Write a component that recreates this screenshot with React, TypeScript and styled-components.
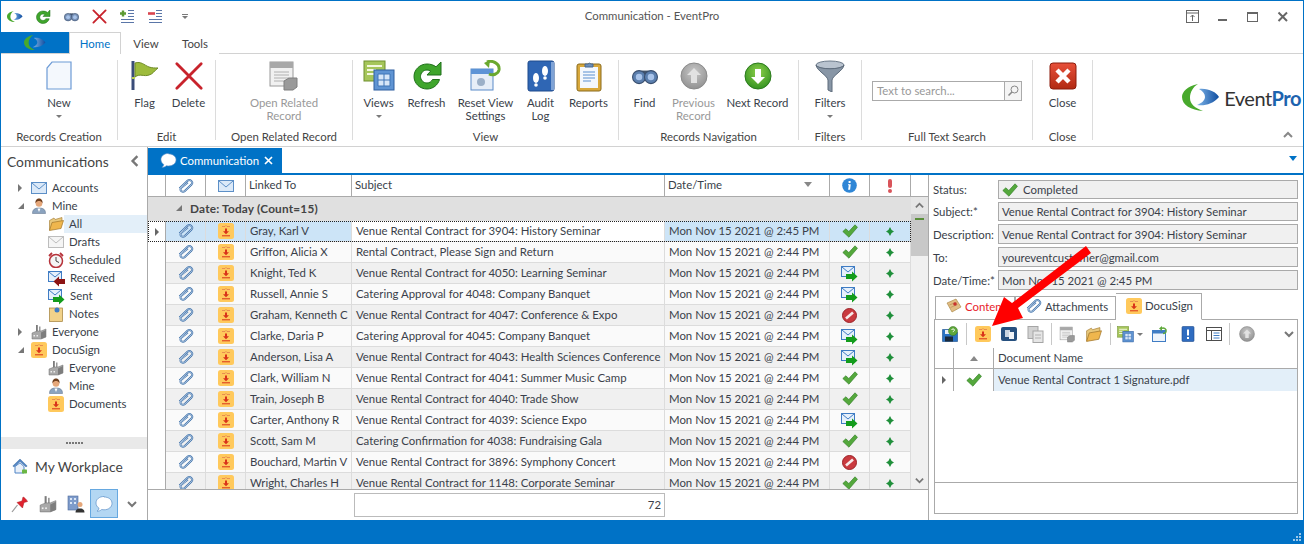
import React from "react";
import styled, { createGlobalStyle } from "styled-components";

const GlobalStyle = createGlobalStyle`
  html, body { margin: 0; padding: 0; background: #fff; }
  * { box-sizing: border-box; }
  body { font-family: "Lato", "Noto Sans", sans-serif; font-size: 11.4px; color: #3a3f4a; }
`;

/* ---------- icons ---------- */
const Ico: React.FC<{ s?: number; v?: number; children: React.ReactNode }> = ({ s = 16, v = 16, children }) => (
  <svg width={s} height={s} viewBox={`0 0 ${v} ${v}`} style={{ flex: "none", display: "block" }}>
    {children}
  </svg>
);

const Swoosh: React.FC<{ w: number }> = ({ w }) => (
  <svg width={w} height={(w * 27) / 38} viewBox="0 0 38 27" style={{ flex: "none", display: "block" }}>
    <defs>
      <linearGradient id="swb" x1="0" x2="1" y1="0" y2="0">
        <stop offset="0" stopColor="#7fb5e8" />
        <stop offset="1" stopColor="#0f4da0" />
      </linearGradient>
    </defs>
    <path d="M16 0C5 2 0 8 0 13c0 8 9 13 21 14-8-3-13-7-13-13C8 8 11 3 16 0z" fill="#48a92c" />
    <path d="M17 5c9-1 17 3 20 8-6 7-14 9-22 8 5-2 8-5 8-8 0-3-2-6-6-8z" fill="url(#swb)" />
  </svg>
);

const Refresh: React.FC<{ s?: number }> = ({ s = 32 }) => (
  <Ico s={s} v={32}>
    <path d="M16 4C9 4 3 9.500 3 16.500S9 29 16 29c6 0 11-4 12.500-9.500h-7C20.500 21.500 18.500 23 16 23c-3.600 0-6.500-3-6.500-6.500S12.400 10 16 10c1.400 0 2.600.4 3.600 1.200L16 15h14V2l-5 4.800C22.600 5 19.500 4 16 4z" fill="#3fa52c" stroke="#1f6f1a" strokeWidth="1" />
  </Ico>
);
const Binoculars: React.FC<{ s?: number; c?: string }> = ({ s = 24, c = "#5b7fae" }) => (
  <Ico s={s} v={24}>
    <rect x="9" y="7" width="6" height="6" fill="#44546a" />
    <circle cx="6.500" cy="13" r="6" fill={c} stroke="#3a4f6e" />
    <circle cx="17.500" cy="13" r="6" fill={c} stroke="#3a4f6e" />
    <circle cx="6.500" cy="13" r="3" fill="#a9c4ea" />
    <circle cx="17.500" cy="13" r="3" fill="#a9c4ea" />
  </Ico>
);
const RedX: React.FC<{ s?: number; w?: number }> = ({ s = 32, w = 3 }) => (
  <Ico s={s} v={32}>
    <path d="M3 3L29 29M29 3L3 29" stroke="#c8232c" strokeWidth={w} strokeLinecap="round" />
  </Ico>
);
const RowEdit: React.FC<{ kind: "add" | "remove" }> = ({ kind }) => (
  <Ico s={16}>
    <path d="M9 1.500h6M9 4.500h6M9 7.500h6M2 10.500h13M2 13.500h13" stroke="#5a76a8" strokeWidth="1" />
    {kind === "add" ? (
      <path d="M1 4.500h6M4 1.500v6" stroke="#5d9a33" strokeWidth="2.400" />
    ) : (
      <path d="M1 4.500h7" stroke="#d9454f" strokeWidth="2.600" />
    )}
  </Ico>
);
const NewDoc = () => (
  <Ico s={32} v={32}>
    <path d="M9 2H28V29H4V8Z" fill="#f4f8fd" stroke="#6d9bd6" strokeWidth="1.200" />
  </Ico>
);
const Flag = () => (
  <Ico s={32} v={32}>
    <path d="M4 1v29" stroke="#3a4d78" strokeWidth="3" />
    <path d="M6 3c6-2 9 2 14 4 3 1 6 1 9 1-4 3-5 6-9 7-5 2-9-2-14 2z" fill="#9dbb3c" stroke="#6f8b27" />
    <path d="M3 18h3" stroke="#b7cf4d" strokeWidth="2" />
  </Ico>
);
const GrayForm: React.FC<{ s?: number }> = ({ s = 32 }) => (
  <Ico s={s} v={32}>
    <rect x="2" y="2" width="23" height="24" fill="#f1f1f1" stroke="#9a9a9a" />
    <rect x="2" y="2" width="23" height="6" fill="#a8a8a8" />
    <path d="M6 12h15M6 15h15M6 18h15M6 21h10" stroke="#b0b0b0" />
    <path d="M16 21l5-3h8v9l-4 3h-9z" fill="#9a9a9a" stroke="#7e7e7e" />
  </Ico>
);
const Views: React.FC<{ s?: number }> = ({ s = 32 }) => (
  <Ico s={s} v={32}>
    <rect x="1" y="1" width="21" height="20" fill="#a6c65a" stroke="#6f8f2e" />
    <path d="M4 6h15M4 10h9M4 14h7" stroke="#f3f8df" strokeWidth="2" />
    <rect x="11" y="10" width="20" height="20" fill="#5f94d3" stroke="#2f5f9f" />
    <path d="M15 14h12v12H15zM15 20h12M21 14v12" fill="#d6e6f8" stroke="#3f74b6" />
  </Ico>
);
const ResetView = () => (
  <Ico s={32} v={32}>
    <rect x="1" y="9" width="22" height="21" fill="#e6eef8" stroke="#5b8bc9" />
    <rect x="1" y="9" width="22" height="5" fill="#5c93d6" />
    <circle cx="11" cy="22" r="4" fill="#9bb0c8" />
    <path d="M17 2c5-2 13 1 12 8-1 4-6 6-10 4" fill="none" stroke="#6aa92f" strokeWidth="3" />
    <path d="M20 0l-6 3 5 5z" fill="#6aa92f" />
  </Ico>
);
const AuditLog = () => (
  <Ico s={32} v={32}>
    <rect x="3" y="1" width="26" height="30" rx="2" fill="#2f66b4" stroke="#1f4a8c" />
    <rect x="26" y="2" width="3" height="28" fill="#7fa3d6" />
    <ellipse cx="11" cy="18" rx="3" ry="5" fill="#fff" />
    <ellipse cx="20" cy="11" rx="3" ry="5" fill="#fff" />
    <circle cx="11" cy="25" r="1.800" fill="#fff" />
    <circle cx="20" cy="18" r="1.800" fill="#fff" />
  </Ico>
);
const Reports = () => (
  <Ico s={32} v={32}>
    <rect x="4" y="4" width="24" height="27" rx="2" fill="#d9a93c" stroke="#8a6a1c" />
    <rect x="7" y="7" width="18" height="21" fill="#f4f8fd" />
    <path d="M10 12h12M10 15h12M10 18h12M10 21h8" stroke="#5a90d0" />
    <path d="M12 7V4h3a2 2 0 0 1 3 0h2v3z" fill="#6d8fb8" stroke="#46668f" />
  </Ico>
);
const RoundArrow: React.FC<{ dir: "up" | "down"; s?: number; off?: boolean }> = ({ dir, s = 28, off }) => (
  <Ico s={s} v={28}>
    <defs>
      <radialGradient id="rag" cx=".5" cy=".35" r=".7">
        <stop offset="0" stopColor="#c8c8c8" />
        <stop offset="1" stopColor="#8e8e8e" />
      </radialGradient>
      <radialGradient id="ragn" cx=".5" cy=".35" r=".7">
        <stop offset="0" stopColor="#8ed04a" />
        <stop offset="1" stopColor="#2e8f1f" />
      </radialGradient>
    </defs>
    <circle cx="14" cy="14" r="13" fill={off ? "url(#rag)" : "url(#ragn)"} stroke={off ? "#8a8a8a" : "#2a7a1c"} />
    <path
      d={dir === "up" ? "M14 6l7 7h-4v8h-6v-8H7z" : "M14 22l7-7h-4V7h-6v8H7z"}
      fill={off ? "#e2e2e2" : "#fff"}
    />
  </Ico>
);
const Funnel = () => (
  <Ico s={32} v={32}>
    <ellipse cx="16" cy="5" rx="14" ry="4" fill="#b9c3cf" stroke="#6c7a8a" />
    <path d="M2 5c1 6 11 10 12 15v10l4 2V20c1-5 11-9 12-15-2 5-26 5-28 0z" fill="#8896a6" stroke="#5d6b7b" />
  </Ico>
);
const CloseBox = () => (
  <Ico s={28} v={28}>
    <defs>
      <linearGradient id="cbr" x1="0" x2="0" y1="0" y2="1">
        <stop offset="0" stopColor="#e8503a" />
        <stop offset="1" stopColor="#b12a12" />
      </linearGradient>
    </defs>
    <rect x="1" y="1" width="26" height="26" rx="3" fill="url(#cbr)" stroke="#8c1d0c" />
    <path d="M8 8l12 12M20 8L8 20" stroke="#fff" strokeWidth="4.500" />
  </Ico>
);
const CLIP = "M1.500 10.500L9.500 2.800C12 .8 15.800 3.800 13.500 6.500L6.800 13C4.600 15 .8 12.400 3.300 9.800L9.800 4.600";
const Paperclip = () => (
  <Ico s={16}>
    <path d={CLIP} fill="none" stroke="#3a6ea8" strokeWidth="1.900" />
    <path d={CLIP} fill="none" stroke="#e3edf8" strokeWidth=".7" />
  </Ico>
);
const Mail: React.FC<{ s?: number; off?: boolean }> = ({ s = 16, off }) => (
  <Ico s={s}>
    <rect x=".5" y="2.500" width="15" height="11" fill={off ? "#f5f5f5" : "#dbe9f8"} stroke={off ? "#bdbdbd" : "#5c8fc7"} />
    <path d="M1 3l7 6 7-6" fill="none" stroke={off ? "#bdbdbd" : "#5c8fc7"} />
  </Ico>
);
const MailArrow: React.FC<{ kind: "sent" | "received" }> = ({ kind }) => (
  <Ico s={17} v={17}>
    <rect x=".5" y="1.500" width="13" height="10" fill="#e6f0fb" stroke="#3f7cc4" />
    <path d="M1 2l6 5 6-5" fill="none" stroke="#3f7cc4" />
    {kind === "sent" ? (
      <path d="M5 9h6V6.500l5.500 5-5.500 5V14H5z" fill="#139c1c" />
    ) : (
      <path d="M17 9h-6V6.500l-5.500 5 5.500 5V14h6z" fill="#8c1414" />
    )}
  </Ico>
);
const DocuIcon = () => (
  <Ico s={16}>
    <rect x="0" y="0" width="16" height="16" rx="2.500" fill="#ffc95c" />
    <path d="M4 3.500h3l1-1 1 1h3" fill="none" stroke="#d9694a" strokeWidth=".6" />
    <path d="M7 5.500h2v2.800h2L8 11.300 5 8.300h2z" fill="#d9331a" />
    <path d="M4 12.800h8" stroke="#d9331a" strokeWidth="1" />
  </Ico>
);
const Check = () => (
  <svg width="16" height="14" viewBox="0 0 16 14" style={{ flex: "none", display: "block" }}>
    <path d="M.8 7.500L3.800 4.800 6.800 7.500 13 .8 15.500 3.300 6.900 13.200z" fill="#54a83c" stroke="#2d7a24" strokeWidth=".6" />
  </svg>
);
const Block = () => (
  <Ico s={15} v={15}>
    <circle cx="7.500" cy="7.500" r="7" fill="#c93a3f" stroke="#9c2227" />
    <path d="M4 10.500L11 4.500" stroke="#f6eaea" strokeWidth="2.600" />
  </Ico>
);
const Diamond = () => (
  <svg width="8" height="9" viewBox="0 0 8 9" style={{ display: "block" }}>
    <path d="M4 0L5.600 2.900 8 4.500 5.600 6.100 4 9 2.400 6.100 0 4.500 2.400 2.900z" fill="#1f8f3a" />
  </svg>
);
const Info = () => (
  <Ico s={15} v={15}>
    <circle cx="7.500" cy="7.500" r="7.300" fill="#2f86d6" />
    <path d="M8.600 3h-2v2h2zM8.300 6.300H6v1h.8l-.7 4.400h2l.7-5.400z" fill="#fff" />
  </Ico>
);
const Exclaim = () => (
  <svg width="6" height="14" viewBox="0 0 6 14" style={{ display: "block" }}>
    <rect x="1" y="0" width="4" height="9" rx="2" fill="#d9545a" />
    <circle cx="3" cy="12" r="2" fill="#d9545a" />
  </svg>
);
const Person: React.FC<{ s?: number }> = ({ s = 16 }) => (
  <Ico s={s}>
    <path d="M1.500 15.500c0-4 2-5.500 6.500-5.500s6.500 1.500 6.500 5.500z" fill="#8ba3bf" stroke="#566b85" strokeWidth=".5" />
    <path d="M6.500 10.500h3L8 14z" fill="#fff" />
    <circle cx="8" cy="5.500" r="3.300" fill="#e5a77a" />
    <path d="M4.500 5.500C4 2 6 .5 8 .5s4 1.500 3.500 5C11 3.500 9 3 8 3s-3 .5-3.500 2.500z" fill="#6e3f1e" />
  </Ico>
);
const Factory: React.FC<{ s?: number }> = ({ s = 16 }) => (
  <Ico s={s}>
    <rect x="5" y="1" width="1.800" height="7" fill="#7c7c7c" />
    <rect x="8" y="2.500" width="1.500" height="6" fill="#9a9a9a" />
    <path d="M1 9l5-2h4l5-2v8l-5 2H1z" fill="#a9a9a9" stroke="#6e6e6e" strokeWidth=".5" />
    <path d="M10 8.500l5-2.500v7l-5 2z" fill="#7d7d7d" />
    <rect x="2.500" y="11" width="1.500" height="1.500" fill="#eee" />
    <rect x="5.500" y="11" width="1.500" height="1.500" fill="#eee" />
  </Ico>
);
const Folder: React.FC<{ s?: number }> = ({ s = 16 }) => (
  <Ico s={s}>
    <path d="M1.500 14V4.500L6 2l1 1.500 7-2v4z" fill="#e8c87c" stroke="#a0762a" strokeWidth=".6" />
    <path d="M1.500 14.500L4 6.500l11.500-2L13 12.500z" fill="#efb64d" stroke="#a0762a" strokeWidth=".7" />
  </Ico>
);
const Alarm = () => (
  <Ico s={16}>
    <circle cx="8" cy="9" r="6.500" fill="#f5f5f5" stroke="#b6323a" strokeWidth="1.500" />
    <path d="M8 5v4l3 1.500" fill="none" stroke="#444" strokeWidth="1" />
    <path d="M1 4l3-3M15 4l-3-3" stroke="#b6323a" strokeWidth="1.800" />
  </Ico>
);
const Note = () => (
  <Ico s={16}>
    <rect x="1.500" y="2" width="13" height="13.500" fill="#f1d28a" stroke="#a27f3a" strokeWidth=".7" />
    <circle cx="9" cy="4" r="2.500" fill="#3f7cc4" />
  </Ico>
);
const Parcel = () => (
  <Ico s={16}>
    <path d="M1 5l9-4 5 8-9 5z" fill="#e2bd84" stroke="#a27f3a" strokeWidth=".6" />
    <path d="M3.500 7l7-3M4.500 9.500l7-3" stroke="#b98f52" strokeWidth=".7" />
    <circle cx="9" cy="6" r="1.800" fill="#c8322f" />
  </Ico>
);
const Home = () => (
  <Ico s={16}>
    <path d="M.8 8L8 1l7.200 7-1.200 1L8 3.500 2 9z" fill="#4f84c6" stroke="#32608f" strokeWidth=".4" />
    <path d="M3 8.500v6.500h9V8.500L8 4.800z" fill="#e9f0f9" stroke="#4f84c6" />
    <rect x="10" y="11.500" width="5" height="4" rx=".7" fill="#6bb644" />
  </Ico>
);
const Pin = () => (
  <Ico s={18} v={18}>
    <path d="M1 17l5.500-7" stroke="#9a9a9a" strokeWidth="1.200" />
    <path d="M6 7.500L11 6l1-4c1 0 4 3 4.500 4.500l-3.500 1-1.500 5.500z" fill="#e0232e" stroke="#a5161e" strokeWidth=".5" />
  </Ico>
);
const BuildingPerson = () => (
  <Ico s={18} v={18}>
    <rect x="1" y="1" width="10" height="14" fill="#7f9ccb" stroke="#4c6a9c" strokeWidth=".6" />
    <path d="M3 3h2v2H3zM7 3h2v2H7zM3 7h2v2H3zM7 7h2v2H7z" fill="#dbe7f7" />
    <circle cx="13" cy="9.500" r="2.500" fill="#e5a77a" />
    <path d="M8.500 17.500c0-3 2-4 4.500-4s4.500 1 4.500 4z" fill="#333" />
  </Ico>
);
const Speech: React.FC<{ s?: number }> = ({ s = 18 }) => (
  <Ico s={s} v={18}>
    <path d="M9 1.500C4.300 1.500 1 4.300 1 8c0 2.200 1.100 4 3 5.200-.2 1.200-.8 2.200-2 3 2 0 3.600-.6 4.700-1.700.7.200 1.500.3 2.300.3 4.700 0 8-2.800 8-6.500s-3.300-6.300-8-6.300z" fill="#fff" stroke="#5b8fc7" strokeWidth=".7" />
  </Ico>
);
const SaveHelp = () => (
  <Ico s={16}>
    <path d="M.5 3.500h11l4 3v9H.5z" fill="#2a73c4" stroke="#174d8a" strokeWidth=".6" />
    <rect x="3" y="10.500" width="8" height="5" fill="#1a2a3c" />
    <rect x="3" y="4" width="6" height="4" fill="#e8eef6" />
    <circle cx="11" cy="5" r="4.500" fill="#5ea83a" stroke="#336f1f" strokeWidth=".5" />
    <path d="M9.500 4c.5-1.500 3-1.300 3 .1 0 1-1.500 1-1.500 2" fill="none" stroke="#fff" strokeWidth="1" />
  </Ico>
);
const CopyBlue = () => (
  <Ico s={16}>
    <rect x="0" y="1" width="16" height="14" rx="2" fill="#26507f" />
    <rect x="4" y="4" width="5" height="7" fill="#c9d4e0" />
    <rect x="8" y="6" width="5" height="7" fill="#f0f3f7" />
  </Ico>
);
const CopyGray = () => (
  <Ico s={17} v={17}>
    <rect x="1" y="0.500" width="10" height="12" fill="#d2d2d2" stroke="#a5a5a5" />
    <rect x="6" y="5" width="10" height="11.500" fill="#e6e6e6" stroke="#a5a5a5" />
    <path d="M8 9h6M8 12h6" stroke="#b0b0b0" />
  </Ico>
);
const WindowReturn = () => (
  <Ico s={16}>
    <rect x=".5" y="4.500" width="13" height="11" fill="#eef4fb" stroke="#3f7cc4" />
    <rect x=".5" y="4.500" width="13" height="3" fill="#3f7cc4" />
    <path d="M9 2.500c3-1.500 6 .5 5 3.500-.5 1-1.500 1.500-3 1.500" fill="none" stroke="#5ea83a" strokeWidth="1.400" />
    <path d="M10 0L7 2.500 10 5z" fill="#5ea83a" />
  </Ico>
);
const BookAlert = () => (
  <Ico s={16}>
    <rect x="2" y="0.500" width="12" height="15" rx="1" fill="#2f6cc0" stroke="#1f4a8c" strokeWidth=".6" />
    <rect x="7" y="3.500" width="2" height="6" fill="#fff" />
    <rect x="7" y="11" width="2" height="2" fill="#fff" />
  </Ico>
);
const ListPanel = () => (
  <Ico s={16}>
    <rect x=".5" y="1.500" width="15" height="13" fill="#fff" stroke="#4d4d4d" />
    <path d="M.5 4.500h15M5.500 4.500v10" stroke="#4d4d4d" />
    <path d="M7.500 7h6M7.500 9.500h6M7.500 12h6" stroke="#3f7cc4" />
  </Ico>
);
const Chevron: React.FC<{ dir: "up" | "down" | "left"; size?: number; color?: string }> = ({
  dir,
  size = 10,
  color = "#777",
}) => (
  <Ico s={size} v={10}>
    <path
      d={dir === "up" ? "M1 7l4-4 4 4" : dir === "down" ? "M1 3l4 4 4-4" : "M7 1L3 5l4 4"}
      fill="none"
      stroke={color}
      strokeWidth="2"
    />
  </Ico>
);
const Caret = styled.span`
  display: block;
  width: 0;
  height: 0;
  border-left: 3px solid transparent;
  border-right: 3px solid transparent;
  border-top: 3px solid #7a7a7a;
`;

/* ---------- frame ---------- */
const Window = styled.div`
  position: relative;
  width: 1304px;
  height: 544px;
  overflow: hidden;
  display: flex;
  flex-direction: column;
  background: #fff;
  border: 1px solid #0072c6;
  border-width: 1px 1px 0;
`;
const TitleBar = styled.div`
  height: 31px;
  flex: none;
  display: grid;
  grid-template-columns: 1fr auto 1fr;
  align-items: center;
`;
const QuickBar = styled.div`
  display: flex;
  align-items: center;
`;
const QuickItem = styled.div`
  width: 28px;
  height: 24px;
  display: flex;
  align-items: center;
  justify-content: center;
`;
const QuickCaret = styled.div`
  margin-left: 13px;
  display: flex;
  flex-direction: column;
  align-items: center;
  gap: 1px;
  &::before {
    content: "";
    width: 6px;
    height: 1px;
    background: #7a7a7a;
  }
`;
const Title = styled.div`
  color: #555;
  margin-bottom: 3px;
`;
const WindowButtons = styled.div`
  display: flex;
  justify-content: flex-end;
  align-items: center;
  gap: 16px;
  padding-right: 13px;
`;
const TabStrip = styled.div`
  height: 22px;
  flex: none;
  display: flex;
  border-bottom: 1px solid #d2d2d2;
`;
const AppButton = styled.div`
  width: 68px;
  height: 21px;
  background: #0072c6;
  display: flex;
  align-items: center;
  justify-content: center;
`;
const RibbonTab = styled.div<{ $w: number; $active?: boolean }>`
  height: 22px;
  width: ${(p) => p.$w}px;
  display: flex;
  align-items: center;
  justify-content: center;
  color: ${(p) => (p.$active ? "#0072c6" : "#444")};
  background: #fff;
  border: 1px solid ${(p) => (p.$active ? "#d2d2d2" : "transparent")};
  border-bottom: 0;
`;
const Ribbon = styled.div`
  height: 93px;
  flex: none;
  display: flex;
  align-items: flex-start;
  padding-top: 6px;
  border-bottom: 1px solid #d2d2d2;
`;
const RibbonSep = styled.div`
  width: 1px;
  height: 80px;
  flex: none;
  background: #dcdcdc;
`;
const RibbonGroup = styled.div<{ $w: number }>`
  width: ${(p) => p.$w}px;
  flex: none;
  height: 84px;
  display: flex;
  flex-direction: column;
`;
const GroupBody = styled.div`
  flex: 1;
  display: flex;
  justify-content: center;
  min-height: 0;
`;
const GroupLabel = styled.div`
  height: 14px;
  line-height: 14px;
  text-align: center;
  color: #444;
  white-space: nowrap;
`;
const RibbonButton = styled.div<{ $w: number; $off?: boolean }>`
  width: ${(p) => p.$w}px;
  flex: none;
  display: flex;
  flex-direction: column;
  align-items: center;
  color: ${(p) => (p.$off ? "#999" : "#3a3f4a")};
  line-height: 13px;
  text-align: center;
`;
const IconSlot = styled.div`
  height: 31px;
  display: flex;
  align-items: center;
  justify-content: center;
  margin-bottom: 5px;
`;
const MenuCaret = styled(Caret)`
  margin-top: 6px;
`;
const SearchBox = styled.div`
  margin-top: 21px;
  width: 150px;
  height: 20px;
  display: flex;
  border: 1px solid #aaa;
  color: #999;
`;
const SearchText = styled.div`
  flex: 1;
  padding-left: 4px;
  line-height: 17px;
`;
const SearchButton = styled.div`
  width: 17px;
  border-left: 1px solid #aaa;
  background: #f4f4f4;
  display: flex;
  align-items: center;
  justify-content: center;
`;
const LogoArea = styled.div`
  flex: 1;
  height: 84px;
  display: flex;
  flex-direction: column;
  align-items: flex-end;
`;
const Logo = styled.div`
  margin-top: 24px;
  display: flex;
  align-items: center;
  gap: 4px;
  padding-right: 2px;
`;
const LogoText = styled.div`
  font-family: "Lato", sans-serif;
  font-size: 20px;
  letter-spacing: -0.5px;
  color: #333;
  b { color: #1d63ae; font-weight: 700; }
`;
const Collapse = styled.div`
  margin-top: 19px;
  padding-right: 10px;
`;

const Body = styled.div`
  flex: 1;
  min-height: 0;
  display: flex;
`;
const StatusBar = styled.div`
  height: 24px;
  flex: none;
  margin: 0 -1px;
  background: #0072c6;
  display: flex;
  justify-content: flex-end;
  align-items: flex-end;
  padding: 0 2px 2px 0;
`;

/* ---------- sidebar ---------- */
const Sidebar = styled.div`
  width: 147px;
  flex: none;
  display: flex;
  flex-direction: column;
  border-right: 1px solid #aaa;
`;
const SideHeader = styled.div`
  height: 30px;
  flex: none;
  display: flex;
  align-items: center;
  justify-content: space-between;
  padding: 0 6px 2px;
  font-size: 13.800px;
  color: #444;
`;
const Tree = styled.div`
  flex: 1;
  padding-top: 2px;
`;
const TreeRow = styled.div<{ $level: number }>`
  height: 18px;
  display: flex;
  align-items: center;
  padding-left: ${(p) => (p.$level === 0 ? 16 : 47)}px;
`;
const Expander = styled.span<{ $open?: boolean }>`
  width: 14px;
  flex: none;
  display: block;
  &::before {
    content: "";
    display: block;
    width: 0;
    height: 0;
    margin-left: 1px;
    ${(p) =>
      p.$open
        ? `border-bottom: 6px solid #777; border-left: 6px solid transparent;`
        : `border-left: 4px solid #777; border-top: 4px solid transparent; border-bottom: 4px solid transparent;`}
  }
`;
const TreeLabel = styled.span<{ $selected?: boolean }>`
  flex: 1;
  height: 18px;
  line-height: 18px;
  padding-left: 5px;
  background: ${(p) => (p.$selected ? "#e3eff9" : "transparent")};
`;
const Splitter = styled.div`
  height: 12px;
  flex: none;
  background: #e9e9e9;
  display: flex;
  align-items: center;
  justify-content: center;
  gap: 1px;
  span {
    width: 2px;
    height: 2px;
    background: #777;
  }
`;
const Workplace = styled.div`
  height: 40px;
  flex: none;
  display: flex;
  align-items: center;
  gap: 7px;
  padding-left: 11px;
  padding-bottom: 6px;
  font-size: 13.800px;
  color: #444;
`;
const PaneIcons = styled.div`
  height: 31px;
  flex: none;
  display: flex;
  align-items: flex-start;
  padding-left: 5px;
`;
const PaneIcon = styled.div<{ $active?: boolean }>`
  width: 28px;
  height: 29px;
  display: flex;
  align-items: center;
  justify-content: center;
  background: ${(p) => (p.$active ? "#b3d7f3" : "transparent")};
  border: 1px solid ${(p) => (p.$active ? "#66a8e0" : "transparent")};
`;

/* ---------- content ---------- */
const Content = styled.div`
  flex: 1;
  min-width: 0;
  display: flex;
  flex-direction: column;
`;
const DocStrip = styled.div`
  height: 28px;
  flex: none;
  padding-top: 1px;
  display: flex;
  justify-content: space-between;
  border-bottom: 2px solid #0072c6;
`;
const DocTab = styled.div`
  width: 134px;
  height: 25px;
  background: #0072c6;
  color: #fff;
  display: flex;
  align-items: center;
  padding-left: 12px;
  gap: 3px;
`;
const DocClose = styled.span`
  margin-left: auto;
  margin-right: 9px;
  display: block;
`;
const DocMenu = styled.span`
  display: block;
  margin: 8px 6px 0 0;
  width: 0;
  height: 0;
  border-left: 4px solid transparent;
  border-right: 4px solid transparent;
  border-top: 5px solid #0072c6;
`;
const Panes = styled.div`
  flex: 1;
  min-height: 0;
  display: flex;
`;
const GridPane = styled.div`
  width: 781px;
  flex: none;
  display: flex;
  flex-direction: column;
  border-right: 1px solid #aaa;
`;
const GridColumns = "18px 40px 40px 106px 313px 165px 40px 41px";
const GridHeader = styled.div`
  height: 22px;
  flex: none;
  display: grid;
  grid-template-columns: ${GridColumns} 1fr;
  border-bottom: 1px solid #aaa;
`;
const HeaderCell = styled.div<{ $center?: boolean }>`
  border-right: 1px solid #aaa;
  display: flex;
  align-items: center;
  justify-content: ${(p) => (p.$center ? "center" : "space-between")};
  padding: ${(p) => (p.$center ? "0" : "0 17px 2px 3px")};
`;
const SortCaret = styled.span`
  display: block;
  width: 0;
  height: 0;
  border-left: 4px solid transparent;
  border-right: 4px solid transparent;
  border-top: 5px solid #888;
`;
const GridMiddle = styled.div`
  flex: 1;
  min-height: 0;
  display: flex;
  border-bottom: 1px solid #aaa;
`;
const GridBody = styled.div`
  width: 763px;
  flex: none;
  overflow: hidden;
`;
const GroupRow = styled.div`
  height: 24px;
  background: #e0e0e0;
  display: flex;
  align-items: center;
  padding: 0 0 2px 28px;
  gap: 8px;
  font-weight: 700;
  font-size: 11.800px;
  letter-spacing: 0.2px;
  color: #444;
`;
const GroupArrow = styled.span`
  display: block;
  width: 0;
  height: 0;
  border-bottom: 6px solid #777;
  border-left: 6px solid transparent;
`;
const Row = styled.div<{ $alt?: boolean; $selected?: boolean }>`
  position: relative;
  height: 21px;
  display: grid;
  grid-template-columns: ${GridColumns};
  background: ${(p) => (p.$selected ? "#cce4f7" : p.$alt ? "#f0f0f0" : "#fafafa")};
  ${(p) => p.$selected && "outline: 1px dotted #222; outline-offset: -1px;"}
`;
const Cell = styled.div<{ $center?: boolean; $white?: boolean }>`
  border-right: 1px solid #dcdcdc;
  border-bottom: 1px solid #dcdcdc;
  display: flex;
  align-items: center;
  justify-content: ${(p) => (p.$center ? "center" : "flex-start")};
  padding: ${(p) => (p.$center ? "0" : "0 0 2px 4px")};
  white-space: nowrap;
  overflow: hidden;
  ${(p) => p.$white && "background: #fff;"}
`;
const Indicator = styled.div<{ $on?: boolean }>`
  background: #fff;
  border-right: 1px solid #aaa;
  display: flex;
  align-items: center;
  justify-content: center;
  &::before {
    content: "";
    display: ${(p) => (p.$on ? "block" : "none")};
    width: 0;
    height: 0;
    border-left: 4px solid #666;
    border-top: 4px solid transparent;
    border-bottom: 4px solid transparent;
  }
`;
const Scrollbar = styled.div`
  flex: 1;
  background: #f0f0f0;
  display: flex;
  flex-direction: column;
  align-items: stretch;
`;
const ScrollUp = styled.div`
  height: 17px;
  background: #e6e6e6;
  display: flex;
  align-items: center;
  justify-content: center;
`;
const ScrollThumb = styled.div`
  height: 42px;
  background: #c8c8c8;
  display: flex;
  justify-content: center;
  padding-top: 4px;
  &::before {
    content: "";
    width: 9px;
    height: 1.500px;
    background: #5a8f3a;
  }
`;
const ScrollDown = styled.div`
  margin-top: auto;
  height: 17px;
  display: flex;
  align-items: center;
  justify-content: center;
`;
const GridFooter = styled.div`
  height: 30px;
  flex: none;
  padding: 3px 0 0 206px;
`;
const SummaryCell = styled.div`
  width: 311px;
  height: 24px;
  border: 1px solid #bbb;
  display: flex;
  align-items: center;
  justify-content: flex-end;
  padding: 0 3px 2px 0;
`;

/* ---------- detail ---------- */
const DetailPane = styled.div`
  flex: 1;
  min-width: 0;
  padding: 5px 5px 6px 4px;
  display: flex;
  flex-direction: column;
`;
const Form = styled.div`
  display: flex;
  flex-direction: column;
  gap: 3px;
  margin-bottom: 4px;
`;
const FormRow = styled.div<{ $h: number }>`
  height: ${(p) => p.$h}px;
  display: grid;
  grid-template-columns: 65px 300px;
  align-items: center;
`;
const FormLabel = styled.span``;
const FormValue = styled.div`
  height: 100%;
  background: #f0f0f0;
  border: 1px solid #aaa;
  display: flex;
  align-items: center;
  gap: 5px;
  padding-left: 3px;
  white-space: nowrap;
`;
const TabRow = styled.div`
  height: 26px;
  flex: none;
  display: flex;
  align-items: flex-end;
  padding-left: 2px;
  margin-bottom: -1px;
`;
const PanelTab = styled.div<{ $w: number; $active?: boolean; $red?: boolean }>`
  position: relative;
  width: ${(p) => p.$w}px;
  height: ${(p) => (p.$active ? 27 : 24)}px;
  display: flex;
  align-items: center;
  padding: 0 0 ${(p) => (p.$active ? 2 : 4)}px 10px;
  gap: 3px;
  border: 1px solid #aaa;
  border-bottom: ${(p) => (p.$active ? "1px solid #fff" : "1px solid #aaa")};
  border-left-width: ${(p) => (p.$active ? 0 : 1)}px;
  color: ${(p) => (p.$red ? "#e8232c" : "#3a3f4a")};
  background: #fff;
`;
const Panel = styled.div`
  flex: 1;
  min-height: 0;
  margin-left: 1px;
  width: 364px;
  border: 1px solid #aaa;
  display: flex;
  flex-direction: column;
`;
const PanelToolbar = styled.div`
  height: 28px;
  flex: none;
  display: flex;
  align-items: center;
  padding-left: 2px;
`;
const ToolSlot = styled.div<{ $w?: number }>`
  width: ${(p) => p.$w ?? 26}px;
  flex: none;
  display: flex;
  align-items: center;
  justify-content: center;
  gap: 3px;
`;
const ToolSep = styled.div`
  width: 1px;
  height: 22px;
  flex: none;
  margin: 0 3px;
  background: #c8c8c8;
`;
const ToolMore = styled.div`
  margin-left: auto;
  padding-right: 3px;
`;
const DocHeader = styled.div`
  height: 21px;
  flex: none;
  display: grid;
  grid-template-columns: 19px 40px 1fr;
  border-bottom: 1px solid #aaa;
`;
const DocHeaderCell = styled.div<{ $center?: boolean }>`
  border-right: 1px solid #aaa;
  display: flex;
  align-items: center;
  justify-content: ${(p) => (p.$center ? "center" : "flex-start")};
  padding: ${(p) => (p.$center ? "0" : "0 0 2px 4px")};
  &:last-child { border-right: 0; }
`;
const SortUp = styled.span`
  display: block;
  width: 0;
  height: 0;
  border-left: 4px solid transparent;
  border-right: 4px solid transparent;
  border-bottom: 5px solid #888;
`;
const DocRow = styled.div`
  height: 22px;
  flex: none;
  display: grid;
  grid-template-columns: 19px 40px 1fr;
`;
const DocName = styled.div`
  background: #e3eff9;
  display: flex;
  align-items: center;
  padding: 0 0 2px 4px;
  white-space: nowrap;
`;
const DocSpacer = styled.div`
  flex: 1;
  border-bottom: 1px solid #aaa;
`;
const DocFooter = styled.div`
  height: 30px;
  flex: none;
`;
const PointerArrow = styled.svg`
  position: absolute;
  left: 980px;
  top: 239px;
  pointer-events: none;
`;

/* ---------- data ---------- */
type Outcome = "done" | "sent" | "blocked";
const ROWS: [string, string, string, Outcome][] = [
  ["Gray, Karl V", "Venue Rental Contract for 3904: History Seminar", "2:45", "done"],
  ["Griffon, Alicia X", "Rental Contract, Please Sign and Return", "2:44", "done"],
  ["Knight, Ted K", "Venue Rental Contract for 4050: Learning Seminar", "2:44", "sent"],
  ["Russell, Annie S", "Catering Approval for 4048: Company Banquet", "2:44", "sent"],
  ["Graham, Kenneth C", "Venue Rental Contract for 4047: Conference & Expo", "2:44", "blocked"],
  ["Clarke, Daria P", "Catering Approval for 4045: Company Banquet", "2:44", "sent"],
  ["Anderson, Lisa A", "Venue Rental Contract for 4043: Health Sciences Conference", "2:44", "sent"],
  ["Clark, William N", "Venue Rental Contract for 4041: Summer Music Camp", "2:44", "done"],
  ["Train, Joseph B", "Venue Rental Contract for 4040: Trade Show", "2:44", "done"],
  ["Carter, Anthony R", "Venue Rental Contract for 4039: Science Expo", "2:44", "sent"],
  ["Scott, Sam M", "Catering Confirmation for 4038: Fundraising Gala", "2:44", "done"],
  ["Bouchard, Martin V", "Venue Rental Contract for 3896: Symphony Concert", "2:44", "blocked"],
  ["Wright, Charles H", "Venue Rental Contract for 1148: Corporate Seminar", "2:44", "done"],
];

const TREE: { level: number; label: string; icon: React.ReactNode; open?: boolean; selected?: boolean }[] = [
  { level: 0, label: "Accounts", icon: <Mail /> },
  { level: 0, label: "Mine", icon: <Person />, open: true },
  { level: 1, label: "All", icon: <Folder />, selected: true },
  { level: 1, label: "Drafts", icon: <Mail off /> },
  { level: 1, label: "Scheduled", icon: <Alarm /> },
  { level: 1, label: "Received", icon: <MailArrow kind="received" /> },
  { level: 1, label: "Sent", icon: <MailArrow kind="sent" /> },
  { level: 1, label: "Notes", icon: <Note /> },
  { level: 0, label: "Everyone", icon: <Factory /> },
  { level: 0, label: "DocuSign", icon: <DocuIcon />, open: true },
  { level: 1, label: "Everyone", icon: <Factory /> },
  { level: 1, label: "Mine", icon: <Person /> },
  { level: 1, label: "Documents", icon: <DocuIcon /> },
];

const outcomeIcon = (o: Outcome) =>
  o === "done" ? <Check /> : o === "sent" ? <MailArrow kind="sent" /> : <Block />;

export default function App() {
  return (
    <>
      <GlobalStyle />
      <Window>
        <TitleBar>
          <QuickBar>
            <QuickItem><Swoosh w={16} /></QuickItem>
            <QuickItem><Refresh s={16} /></QuickItem>
            <QuickItem><Binoculars s={15} c="#7a93b8" /></QuickItem>
            <QuickItem><RedX s={15} w={4} /></QuickItem>
            <QuickItem><RowEdit kind="add" /></QuickItem>
            <QuickItem><RowEdit kind="remove" /></QuickItem>
            <QuickCaret><Caret /></QuickCaret>
          </QuickBar>
          <Title>Communication - EventPro</Title>
          <WindowButtons>
            <Ico s={14} v={14}>
              <rect x=".5" y=".5" width="12" height="12" fill="none" stroke="#666" />
              <path d="M.5 3h12M6.500 11V5M4.500 7l2-2 2 2" fill="none" stroke="#666" />
            </Ico>
            <Ico s={14} v={14}>
              <path d="M2 10h9" stroke="#666" strokeWidth="2" />
            </Ico>
            <Ico s={14} v={14}>
              <rect x="1.500" y="2.500" width="10" height="9" fill="none" stroke="#666" />
              <path d="M1.500 3h10" stroke="#666" strokeWidth="2" />
            </Ico>
            <Ico s={14} v={14}>
              <path d="M2.500 2.500l8.500 8.500M11 2.500L2.500 11" stroke="#666" strokeWidth="2" />
            </Ico>
          </WindowButtons>
        </TitleBar>

        <TabStrip>
          <AppButton><Swoosh w={22} /></AppButton>
          <RibbonTab $w={52} $active>Home</RibbonTab>
          <RibbonTab $w={50}>View</RibbonTab>
          <RibbonTab $w={48}>Tools</RibbonTab>
        </TabStrip>

        <Ribbon>
          <RibbonGroup $w={116}>
            <GroupBody>
              <RibbonButton $w={60}>
                <IconSlot><NewDoc /></IconSlot>New<MenuCaret />
              </RibbonButton>
            </GroupBody>
            <GroupLabel>Records Creation</GroupLabel>
          </RibbonGroup>
          <RibbonSep />
          <RibbonGroup $w={97}>
            <GroupBody>
              <RibbonButton $w={44}>
                <IconSlot><Flag /></IconSlot>Flag
              </RibbonButton>
              <RibbonButton $w={44}>
                <IconSlot><RedX s={30} /></IconSlot>Delete
              </RibbonButton>
            </GroupBody>
            <GroupLabel>Edit</GroupLabel>
          </RibbonGroup>
          <RibbonSep />
          <RibbonGroup $w={136}>
            <GroupBody>
              <RibbonButton $w={90} $off>
                <IconSlot><GrayForm /></IconSlot>Open Related<br />Record
              </RibbonButton>
            </GroupBody>
            <GroupLabel>Open Related Record</GroupLabel>
          </RibbonGroup>
          <RibbonSep />
          <RibbonGroup $w={265}>
            <GroupBody>
              <RibbonButton $w={50}>
                <IconSlot><Views /></IconSlot>Views<MenuCaret />
              </RibbonButton>
              <RibbonButton $w={46}>
                <IconSlot><Refresh /></IconSlot>Refresh
              </RibbonButton>
              <RibbonButton $w={72}>
                <IconSlot><ResetView /></IconSlot>Reset View<br />Settings
              </RibbonButton>
              <RibbonButton $w={38}>
                <IconSlot><AuditLog /></IconSlot>Audit<br />Log
              </RibbonButton>
              <RibbonButton $w={58}>
                <IconSlot><Reports /></IconSlot>Reports
              </RibbonButton>
            </GroupBody>
            <GroupLabel>View</GroupLabel>
          </RibbonGroup>
          <RibbonSep />
          <RibbonGroup $w={179}>
            <GroupBody>
              <RibbonButton $w={50}>
                <IconSlot><Binoculars s={26} /></IconSlot>Find
              </RibbonButton>
              <RibbonButton $w={48} $off>
                <IconSlot><RoundArrow dir="up" off /></IconSlot>Previous<br />Record
              </RibbonButton>
              <RibbonButton $w={80}>
                <IconSlot><RoundArrow dir="down" /></IconSlot>Next Record
              </RibbonButton>
            </GroupBody>
            <GroupLabel>Records Navigation</GroupLabel>
          </RibbonGroup>
          <RibbonSep />
          <RibbonGroup $w={62}>
            <GroupBody>
              <RibbonButton $w={60}>
                <IconSlot><Funnel /></IconSlot>Filters<MenuCaret />
              </RibbonButton>
            </GroupBody>
            <GroupLabel>Filters</GroupLabel>
          </RibbonGroup>
          <RibbonSep />
          <RibbonGroup $w={170}>
            <GroupBody>
              <SearchBox>
                <SearchText>Text to search...</SearchText>
                <SearchButton>
                  <Ico s={12} v={12}>
                    <circle cx="7.500" cy="4.500" r="3.500" fill="none" stroke="#888" />
                    <path d="M5 7L1.500 10.500" stroke="#888" strokeWidth="1.600" />
                  </Ico>
                </SearchButton>
              </SearchBox>
            </GroupBody>
            <GroupLabel>Full Text Search</GroupLabel>
          </RibbonGroup>
          <RibbonSep />
          <RibbonGroup $w={59}>
            <GroupBody>
              <RibbonButton $w={56}>
                <IconSlot><CloseBox /></IconSlot>Close
              </RibbonButton>
            </GroupBody>
            <GroupLabel>Close</GroupLabel>
          </RibbonGroup>
          <RibbonSep />
          <LogoArea>
            <Logo>
              <Swoosh w={38} />
              <LogoText>Event<b>Pro</b></LogoText>
            </Logo>
            <Collapse><Chevron dir="up" color="#888" /></Collapse>
          </LogoArea>
        </Ribbon>

        <Body>
          <Sidebar>
            <SideHeader>
              Communications
              <Chevron dir="left" size={12} color="#777" />
            </SideHeader>
            <Tree>
              {TREE.map((n, i) => (
                <TreeRow key={i} $level={n.level}>
                  {n.level === 0 && <Expander $open={n.open} />}
                  {n.icon}
                  <TreeLabel $selected={n.selected}>{n.label}</TreeLabel>
                </TreeRow>
              ))}
            </Tree>
            <Splitter>
              {[0, 1, 2, 3, 4, 5].map((d) => <span key={d} />)}
            </Splitter>
            <Workplace><Home />My Workplace</Workplace>
            <PaneIcons>
              <PaneIcon><Pin /></PaneIcon>
              <PaneIcon><Factory s={18} /></PaneIcon>
              <PaneIcon><BuildingPerson /></PaneIcon>
              <PaneIcon $active><Speech /></PaneIcon>
              <PaneIcon><Chevron dir="down" color="#777" /></PaneIcon>
            </PaneIcons>
          </Sidebar>

          <Content>
            <DocStrip>
              <DocTab>
                <Speech s={17} />Communication
                <DocClose>
                  <Ico s={9} v={9}>
                    <path d="M1 1l7 7M8 1L1 8" stroke="#fff" strokeWidth="1.700" />
                  </Ico>
                </DocClose>
              </DocTab>
              <DocMenu />
            </DocStrip>
            <Panes>
              <GridPane>
                <GridHeader>
                  <HeaderCell $center />
                  <HeaderCell $center><Paperclip /></HeaderCell>
                  <HeaderCell $center><Mail /></HeaderCell>
                  <HeaderCell>Linked To</HeaderCell>
                  <HeaderCell>Subject</HeaderCell>
                  <HeaderCell>Date/Time<SortCaret /></HeaderCell>
                  <HeaderCell $center><Info /></HeaderCell>
                  <HeaderCell $center><Exclaim /></HeaderCell>
                  <div />
                </GridHeader>
                <GridMiddle>
                  <GridBody>
                    <GroupRow><GroupArrow />Date: Today (Count=15)</GroupRow>
                    {ROWS.map(([name, subject, time, outcome], i) => (
                      <Row key={i} $selected={i === 0} $alt={i % 2 === 0}>
                        <Indicator $on={i === 0} />
                        <Cell $center><Paperclip /></Cell>
                        <Cell $center><DocuIcon /></Cell>
                        <Cell>{name}</Cell>
                        <Cell $white={i === 0}>{subject}</Cell>
                        <Cell>Mon Nov 15 2021 @ {time} PM</Cell>
                        <Cell $center>{outcomeIcon(outcome)}</Cell>
                        <Cell $center><Diamond /></Cell>
                      </Row>
                    ))}
                  </GridBody>
                  <Scrollbar>
                    <ScrollUp><Chevron dir="up" size={9} color="#777" /></ScrollUp>
                    <ScrollThumb />
                    <ScrollDown><Chevron dir="down" size={9} color="#777" /></ScrollDown>
                  </Scrollbar>
                </GridMiddle>
                <GridFooter>
                  <SummaryCell>72</SummaryCell>
                </GridFooter>
              </GridPane>

              <DetailPane>
                <Form>
                  <FormRow $h={19}><FormLabel>Status:</FormLabel><FormValue><Check />Completed</FormValue></FormRow>
                  <FormRow $h={19}><FormLabel>Subject:*</FormLabel><FormValue>Venue Rental Contract for 3904: History Seminar</FormValue></FormRow>
                  <FormRow $h={20}><FormLabel>Description:</FormLabel><FormValue>Venue Rental Contract for 3904: History Seminar</FormValue></FormRow>
                  <FormRow $h={20}><FormLabel>To:</FormLabel><FormValue>youreventcustomer@gmail.com</FormValue></FormRow>
                  <FormRow $h={20}><FormLabel>Date/Time:*</FormLabel><FormValue>Mon Nov 15 2021 @ 2:45 PM</FormValue></FormRow>
                </Form>
                <TabRow>
                  <PanelTab $w={80} $red><Parcel />Contents</PanelTab>
                  <PanelTab $w={101}><Paperclip />Attachments</PanelTab>
                  <PanelTab $w={86} $active><DocuIcon />DocuSign</PanelTab>
                </TabRow>
                <Panel>
                  <PanelToolbar>
                    <ToolSlot><SaveHelp /></ToolSlot>
                    <ToolSep />
                    <ToolSlot><DocuIcon /></ToolSlot>
                    <ToolSlot><CopyBlue /></ToolSlot>
                    <ToolSlot><CopyGray /></ToolSlot>
                    <ToolSep />
                    <ToolSlot $w={24}><GrayForm s={17} /></ToolSlot>
                    <ToolSlot $w={28}><Folder s={17} /></ToolSlot>
                    <ToolSep />
                    <ToolSlot $w={32}><Views s={17} /><Caret /></ToolSlot>
                    <ToolSlot $w={28}><WindowReturn /></ToolSlot>
                    <ToolSlot $w={28}><BookAlert /></ToolSlot>
                    <ToolSlot $w={24}><ListPanel /></ToolSlot>
                    <ToolSep />
                    <ToolSlot $w={28}><RoundArrow dir="up" s={16} off /></ToolSlot>
                    <ToolMore><Chevron dir="down" color="#777" /></ToolMore>
                  </PanelToolbar>
                  <DocHeader>
                    <DocHeaderCell />
                    <DocHeaderCell $center><SortUp /></DocHeaderCell>
                    <DocHeaderCell>Document Name</DocHeaderCell>
                  </DocHeader>
                  <DocRow>
                    <Indicator $on />
                    <DocHeaderCell $center><Check /></DocHeaderCell>
                    <DocName>Venue Rental Contract 1 Signature.pdf</DocName>
                  </DocRow>
                  <DocSpacer />
                  <DocFooter />
                </Panel>
              </DetailPane>
            </Panes>
          </Content>
        </Body>
        <StatusBar>
          <svg width="10" height="10" viewBox="0 0 10 10" style={{ display: "block" }}>
            <path d="M7 1h2v2H7zM4 4h2v2H4zM7 4h2v2H7zM1 7h2v2H1zM4 7h2v2H4zM7 7h2v2H7z" fill="#9cc7e8" />
          </svg>
        </StatusBar>
        <PointerArrow width="112" height="90" viewBox="0 0 112 90">
          <path d="M105 6L110 13L37 68L42 78L11 86L23 57L31 63Z" fill="#f00" />
        </PointerArrow>
      </Window>
    </>
  );
}
